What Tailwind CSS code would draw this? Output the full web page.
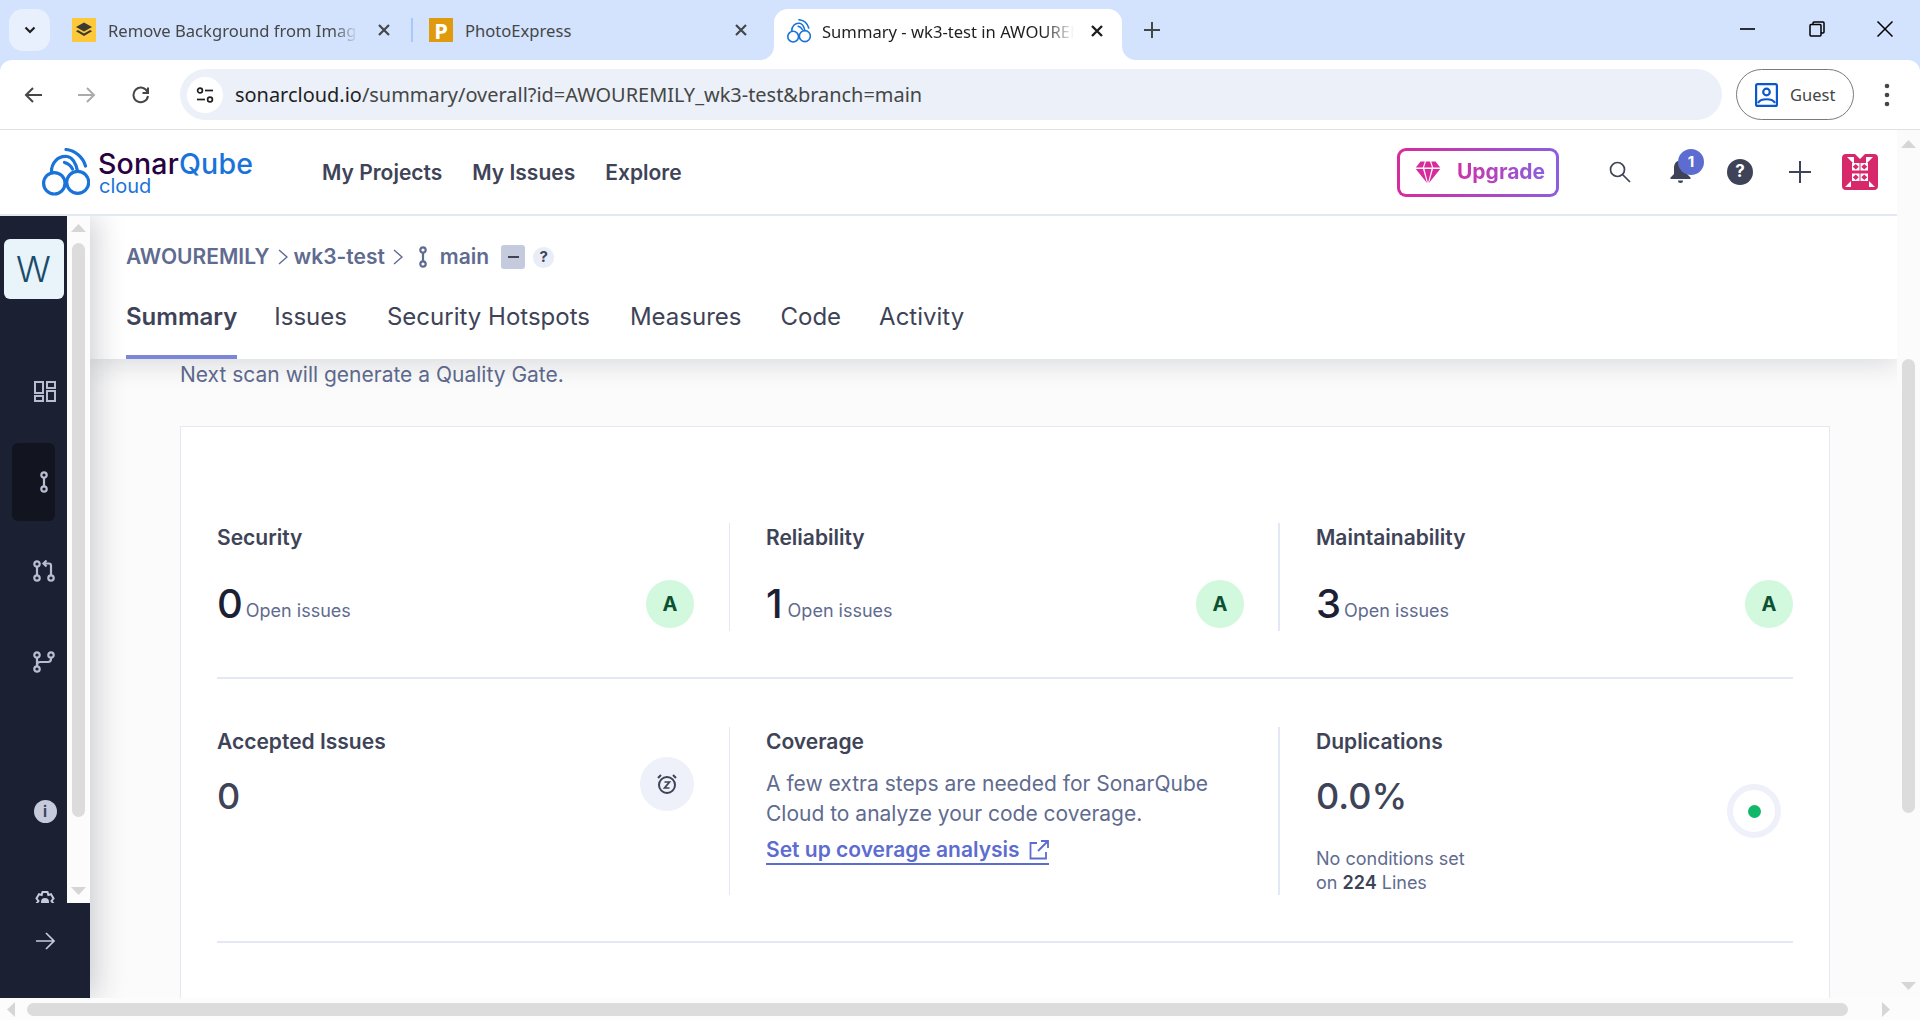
<!DOCTYPE html>
<html lang="en">
<head>
<meta charset="utf-8">
<title>Summary - wk3-test</title>
<script src="https://cdn.jsdelivr.net/npm/@tailwindcss/browser@4"></script>
</head>
<body class="w-[1920px] h-[1020px] overflow-hidden bg-white font-[Inter,sans-serif]">
<svg width="0" height="0" class="absolute">
  <defs>
    <symbol id="sq" viewBox="0 0 48 48">
      <g fill="none" stroke="currentColor" stroke-width="3.200" stroke-linecap="round">
        <circle cx="12.300" cy="35.300" r="10.700"/>
        <circle cx="35.700" cy="34.300" r="11"/>
        <path d="M9.500 24.500C9 15 16 7.500 25 8.500C30 9 34 15 35.500 23"/>
        <path d="M24 1.500C33 2.500 41 9 43.500 18"/>
        <path d="M22.500 14.500C26 15.500 29 18 30.500 21"/>
      </g>
    </symbol>
    <symbol id="branch" viewBox="0 0 12 22">
      <g fill="none" stroke="currentColor" stroke-width="2.2">
        <circle cx="6" cy="4" r="2.7"/><circle cx="6" cy="18" r="2.7"/><path d="M6 7v8"/>
      </g>
    </symbol>
  </defs>
</svg>

<div class="flex h-full flex-col">
  <!-- Tab strip -->
  <div class="flex h-[60px] shrink-0 items-start bg-[#d3e3fd] font-['Noto_Sans',sans-serif] text-[16.6px] text-[#444746]">
    <div class="ml-[9px] mt-[9px] flex h-[42px] w-[41px] items-center justify-center rounded-[14px] bg-[#e9f0fd]">
      <svg width="14" height="14" viewBox="0 0 14 14" fill="none" stroke="#1f1f1f" stroke-width="2.2"><path d="M2.5 4.5 7 9l4.500-4.500"/></svg>
    </div>
    <!-- tab 1 -->
    <div class="ml-[22px] mt-[18px] flex h-[24px] w-[340px] items-center">
      <div class="flex size-[24px] items-center justify-center bg-[#fdc93a]">
        <svg width="18" height="16" viewBox="0 0 18 16" fill="#3b3a32"><path d="M9 0.500 17 5 9 9.500 1 5Z"/><path d="M2.800 8 9 11.500 15.200 8 17 9.200 9 14 1 9.200Z"/></svg>
      </div>
      <span class="ml-[12px] w-[250px] translate-y-[1px] overflow-hidden whitespace-nowrap leading-[24px] [mask-image:linear-gradient(90deg,#000_90%,transparent)]">Remove Background from Imag</span>
      <svg class="ml-[19px]" width="14" height="14" viewBox="0 0 14 14" stroke="#444746" stroke-width="2.200"><path d="M2 2l10 10M12 2 2 12"/></svg>
    </div>
    <div class="ml-[-1px] mt-[18px] h-[24px] w-[2px] bg-[#a8c7fa]"></div>
    <!-- tab 2 -->
    <div class="ml-[16px] mt-[18px] flex h-[24px] w-[319px] items-center">
      <div class="flex size-[24px] items-center justify-center bg-[#e09a0d] text-[22px] font-bold leading-none text-white">P</div>
      <span class="ml-[12px] translate-y-[1px] whitespace-nowrap leading-[24px]">PhotoExpress</span>
      <svg class="ml-auto" width="14" height="14" viewBox="0 0 14 14" stroke="#444746" stroke-width="2.200"><path d="M2 2l10 10M12 2 2 12"/></svg>
    </div>
    <!-- active tab -->
    <div class="relative ml-[26px] mt-[9px] flex h-[51px] w-[348px] items-center rounded-t-[14px] bg-white pb-[7px] text-[#1f1f1f]">
      <svg class="absolute bottom-0 left-[-14px]" width="14" height="14" viewBox="0 0 14 14"><path d="M0 14A14 14 0 0 0 14 0V14Z" fill="#fff"/></svg>
      <svg class="absolute bottom-0 right-[-14px]" width="14" height="14" viewBox="0 0 14 14"><path d="M14 14A14 14 0 0 1 0 0V14Z" fill="#fff"/></svg>
      <svg class="ml-[13px] text-[#1a73d8]" width="24" height="24"><use href="#sq"/></svg>
      <span class="ml-[11px] w-[252px] translate-y-[1px] overflow-hidden whitespace-nowrap leading-[24px] [mask-image:linear-gradient(90deg,#000_88%,transparent)]">Summary - wk3-test in AWOUREMILY</span>
      <svg class="ml-[16px]" width="14" height="14" viewBox="0 0 14 14" stroke="#1f1f1f" stroke-width="2.400"><path d="M2 2l10 10M12 2 2 12"/></svg>
    </div>
    <svg class="ml-[22px] mt-[22px]" width="16" height="16" viewBox="0 0 16 16" stroke="#444746" stroke-width="2"><path d="M8 0v16M0 8h16"/></svg>
    <!-- window controls -->
    <div class="ml-auto flex items-center pr-[27px] pt-[21px]">
      <svg width="15" height="16" viewBox="0 0 15 16" stroke="#000" stroke-width="1.600"><path d="M0 8h15"/></svg>
      <svg class="ml-[54px]" width="16" height="16" viewBox="0 0 16 16" fill="none" stroke="#000" stroke-width="1.500"><rect x="1" y="3.500" width="11" height="11.500" rx="1"/><path d="M4 3.500V2a1 1 0 0 1 1-1h9a1 1 0 0 1 1 1v9a1 1 0 0 1-1 1h-2"/></svg>
      <svg class="ml-[52px]" width="16" height="16" viewBox="0 0 16 16" stroke="#000" stroke-width="1.500"><path d="M0.500 0.500l15 15M15.500 0.500l-15 15"/></svg>
    </div>
  </div>

  <!-- Toolbar -->
  <div class="bg-[#d3e3fd]">
    <div class="flex h-[70px] items-center rounded-t-[12px] border-b border-[#e1e1e1] bg-white font-['Noto_Sans',sans-serif]">
      <svg class="ml-[24px]" width="18" height="18" viewBox="0 0 18 18" fill="none" stroke="#444746" stroke-width="2"><path d="M18 9H2M9 2 2 9l7 7"/></svg>
      <svg class="ml-[36px]" width="18" height="18" viewBox="0 0 18 18" fill="none" stroke="#ababab" stroke-width="2"><path d="M0 9h16M9 2l7 7-7 7"/></svg>
      <svg class="ml-[36px]" width="18" height="18" viewBox="0 0 18 18" fill="none" stroke="#444746" stroke-width="2"><path d="M15.500 6A7.300 7.300 0 1 0 16 10"/><path d="M16 1.500V7h-5.500" /></svg>
      <div class="ml-[30px] flex h-[51px] w-[1542px] items-center rounded-full bg-[#ebf0f9] pl-[7px]">
        <div class="flex size-[36px] items-center justify-center rounded-full bg-white">
          <svg width="20" height="18" viewBox="0 0 20 18" fill="none" stroke="#1f1f1f" stroke-width="1.700"><circle cx="5" cy="4.500" r="2.400"/><path d="M10 4.500h8"/><circle cx="15" cy="13.500" r="2.400"/><path d="M2 13.500h8"/></svg>
        </div>
        <span class="ml-[12px] whitespace-nowrap text-[19.95px] leading-[28px] text-[#444746]"><span class="text-[#1f1f1f]">sonarcloud.io</span>/summary/overall?id=AWOUREMILY_wk3-test&amp;branch=main</span>
      </div>
      <div class="ml-[14px] flex h-[51px] w-[118px] items-center rounded-full border-[1.5px] border-[#7a7a7a] pl-[18px]">
        <svg width="23" height="24" viewBox="0 0 23 24" fill="none" stroke="#0b57d0" stroke-width="2.200"><rect x="1.100" y="1.100" width="20.800" height="21.800" rx="1.500"/><circle cx="11.500" cy="9" r="3.300"/><path d="M3 20c2.500-5 14.500-5 17 0"/></svg>
        <span class="ml-[12px] text-[16.5px] leading-[24px] text-[#444746]">Guest</span>
      </div>
      <svg class="ml-[30px]" width="6" height="24" viewBox="0 0 6 24" fill="#444746"><circle cx="3" cy="3" r="2.300"/><circle cx="3" cy="12" r="2.300"/><circle cx="3" cy="21" r="2.300"/></svg>
    </div>
  </div>

  <!-- Page area -->
  <div class="flex min-h-0 flex-1">
    <div class="flex min-w-0 flex-1 flex-col">
      <!-- Top nav -->
      <div class="relative z-30 flex h-[86px] shrink-0 items-center border-b-2 border-[#e3e8f4] bg-white">
        <svg class="ml-[42px] text-[#1a73d8]" width="48" height="48"><use href="#sq"/></svg>
        <div class="ml-[8px] mt-[1px] flex w-[171px] flex-col">
          <span class="text-[28.5px] font-medium leading-[26px] tracking-[0.2px] text-[#290042]">Sonar<span class="text-[#1a73d8]">Qube</span></span>
          <span class="ml-[1px] text-[20px] leading-[18px] text-[#1a73d8]">cloud</span>
        </div>
        <div class="ml-[53px] mt-[1px] flex gap-[30px] text-[21px] font-semibold leading-[28px] text-[#3e4357]">
          <span>My Projects</span><span>My Issues</span><span>Explore</span>
        </div>
        <div class="ml-auto flex h-[49px] w-[162px] items-center rounded-[9px] bg-[linear-gradient(90deg,#d92a9c,#8a5fe0)] p-[3px]">
          <div class="flex h-full w-full items-center rounded-[6px] bg-white pl-[15px]">
            <svg width="26" height="23" viewBox="0 0 26 23" fill="#d92a9c"><path d="M5.500 0.500h4.300L7.800 6.500H0.800Z"/><path d="M11 0.500h4L17 6.500H9Z"/><path d="M16.300 0.500h4.200l4.700 6h-7Z"/><path d="M0.800 8H8l4 14Z"/><path d="M9.500 8h7L13 22Z"/><path d="M18 8h7.200L14 22Z"/></svg>
            <span class="ml-[16px] bg-[linear-gradient(90deg,#cf32a8,#8a5fe0)] bg-clip-text text-[21px] font-bold leading-[28px] text-transparent">Upgrade</span>
          </div>
        </div>
        <svg class="ml-[50px]" width="22" height="22" viewBox="0 0 22 22" fill="none" stroke="#3e4357" stroke-width="1.700"><circle cx="8.500" cy="8.500" r="7"/><path d="m13.500 13.500 7.500 7.500"/></svg>
        <div class="relative ml-[39px] h-[24px] w-[21px]">
          <svg width="21" height="24" viewBox="0 0 21 24" fill="#3e4357"><path d="M10.500 0.500c4.500 0 6.500 3.500 6.500 7.500v6l3.500 3.500v1.500H0.500v-1.500L4 14V8c0-4 2-7.500 6.500-7.500Z"/><path d="M8 20.500h5a2.500 2.500 0 0 1-5 0Z"/></svg>
          <span class="absolute left-[8px] top-[-11px] flex size-[26px] items-center justify-center rounded-full bg-[#5d6cd0] text-[15px] font-bold text-white">1</span>
        </div>
        <span class="ml-[36px] flex size-[26px] items-center justify-center rounded-full bg-[#3e4357] text-[17px] font-bold text-white">?</span>
        <svg class="ml-[36px]" width="22" height="22" viewBox="0 0 22 22" stroke="#3e4357" stroke-width="2"><path d="M11 0v22M0 11h22"/></svg>
        <svg class="ml-[31px] mr-[19px]" width="36" height="36" viewBox="0 0 36 36"><path d="M4 0h9l5 5 5-5h9a4 4 0 0 1 4 4v28a4 4 0 0 1-4 4H4a4 4 0 0 1-4-4V4a4 4 0 0 1 4-4Z" fill="#d6286b"/><g fill="#fff"><path d="M5 3l7 0v7ZM31 3h-7v7ZM3 33l6-6v6ZM33 33l-6-6v6Z"/><path d="M10 9h7.500v7.500H10ZM18.500 9H26v7.500h-7.500ZM10 19.500h7.500V27H10ZM18.500 19.500H26V27h-7.500Z"/></g><g fill="#d6286b"><path d="M13.750 10l3 2.750-3 2.750-3-2.750ZM22.250 10l3 2.750-3 2.750-3-2.750ZM13.750 20.500l3 2.750-3 2.750-3-2.750ZM22.250 20.500l3 2.750-3 2.750-3-2.750Z"/></g></svg>
      </div>

      <div class="flex min-h-0 flex-1">
        <!-- Sidebar -->
        <div class="relative z-20 flex w-[90px] shrink-0 flex-col bg-[#1c2033] shadow-[6px_0_30px_rgba(30,35,60,0.22)]">
          <div class="flex h-[687px] shrink-0">
            <div class="flex h-full w-[67px] flex-col items-center overflow-hidden text-[#b9bdd1]">
              <div class="mt-[23px] flex size-[60px] shrink-0 items-center justify-center rounded-[6px] bg-[#e8f3fa] text-[36px] font-light leading-none text-[#1b4b6b]">W</div>
              <svg class="ml-[23px] mt-[82px] shrink-0" width="22" height="21" viewBox="0 0 22 21" fill="none" stroke="#b9bdd1" stroke-width="2"><rect x="1" y="1" width="8" height="11"/><rect x="13" y="1" width="8" height="6"/><rect x="1" y="15" width="8" height="5"/><rect x="13" y="10" width="8" height="10"/></svg>
              <div class="mt-[41px] flex h-[78px] w-[43px] shrink-0 items-center justify-end rounded-[6px] bg-[#12151f] pr-[5px]">
                <svg class="text-[#b9bdd1]" width="12" height="22"><use href="#branch"/></svg>
              </div>
              <svg class="ml-[21px] mt-[39px] shrink-0" width="22" height="22" viewBox="0 0 22 22" fill="none" stroke="#b9bdd1" stroke-width="2.200"><circle cx="4" cy="4" r="2.700"/><circle cx="4" cy="18" r="2.700"/><path d="M4 7v8"/><circle cx="18" cy="18" r="2.700"/><path d="M18 15V5.500a2 2 0 0 0-2-2h-5"/><path d="m13.500 0.500-3 3 3 3"/></svg>
              <svg class="ml-[21px] mt-[69px] shrink-0" width="22" height="22" viewBox="0 0 22 22" fill="none" stroke="#b9bdd1" stroke-width="2.200"><circle cx="4" cy="4" r="2.700"/><circle cx="4" cy="18" r="2.700"/><path d="M4 7v8"/><circle cx="18" cy="4" r="2.700"/><path d="M18 7v1a3 3 0 0 1-3 3H7a3 3 0 0 0-3 3"/></svg>
              <span class="ml-[23px] mt-[127px] flex size-[23px] shrink-0 items-center justify-center rounded-full bg-[#c5cadd] text-[15px] font-bold leading-none text-[#3e4357]">i</span>
              <svg class="ml-[23px] mt-[68px] shrink-0" width="22" height="22" viewBox="0 0 22 22" fill="none" stroke="#c5cadd" stroke-width="2"><path d="M8.500 1h5l.8 3 2.700-.8 2.500 4.300-2 2.500 2 2.500-2.500 4.300-2.700-.8-.8 3h-5l-.8-3-2.700.8-2.500-4.300 2-2.500-2-2.500L5 3.200l2.700.8Z"/><circle cx="11" cy="11" r="3" fill="#c5cadd"/></svg>
            </div>
            <div class="flex h-full w-[23px] flex-col items-center bg-[#fcfcfc]">
              <svg class="mt-[8px]" width="15" height="8" viewBox="0 0 15 8" fill="#d6d6d6"><path d="M7.500 0 15 8H0Z"/></svg>
              <div class="mt-[11px] h-[574px] w-[13px] rounded-full bg-[#dcdcdc]"></div>
              <svg class="mt-[70px]" width="15" height="8" viewBox="0 0 15 8" fill="#d6d6d6"><path d="M7.500 8 15 0H0Z"/></svg>
            </div>
          </div>
          <div class="flex flex-1 pl-[36px] pt-[29px]">
            <svg width="19" height="18" viewBox="0 0 19 18" fill="none" stroke="#c5cadd" stroke-width="1.700"><path d="M0 9h18M10 1l8 8-8 8"/></svg>
          </div>
        </div>

        <!-- Content -->
        <div class="relative flex min-w-0 flex-1 flex-col bg-[#fbfbfb]">
          <div class="relative z-10 h-[143px] shrink-0 bg-white pl-[36px] pt-[27px] shadow-[0_6px_24px_rgba(30,35,60,0.14)]">
            <div class="flex h-[28px] items-center text-[21px] font-semibold text-[#5f6b8f]">
              <span>AWOUREMILY</span>
              <svg class="ml-[8px]" width="10" height="18" viewBox="0 0 10 18" fill="none" stroke="#5f6b8f" stroke-width="1.400"><path d="m1 2 8 7-8 7"/></svg>
              <span class="ml-[6px]">wk3-test</span>
              <svg class="ml-[8px]" width="10" height="18" viewBox="0 0 10 18" fill="none" stroke="#5f6b8f" stroke-width="1.400"><path d="m1 2 8 7-8 7"/></svg>
              <svg class="ml-[14px]" width="12" height="22"><use href="#branch"/></svg>
              <span class="ml-[11px]">main</span>
              <span class="ml-[12px] flex h-[24px] w-[24px] items-center justify-center rounded-[3px] bg-[#c5cadd]"><span class="h-[2px] w-[11px] bg-[#3e4357]"></span></span>
              <span class="ml-[8px] flex size-[21px] items-center justify-center rounded-full bg-[#e9edf8] text-[15px] font-bold text-[#3e4357]">?</span>
            </div>
            <div class="mt-[16px] flex h-[72px] pt-[14px] text-[24px] leading-[31px] text-[#3e4357]">
              <span class="border-b-[4px] border-[#7c86d8] font-semibold">Summary</span>
              <span class="ml-[37px]">Issues</span>
              <span class="ml-[40px]">Security Hotspots</span>
              <span class="ml-[40px]">Measures</span>
              <span class="ml-[39px]">Code</span>
              <span class="ml-[38px]">Activity</span>
            </div>
          </div>

          <div class="min-h-0 flex-1 overflow-hidden pl-[90px] pr-[67px]">
            <p class="pt-[2px] text-[21px] leading-[28px] text-[#5f6b8f]">Next scan will generate a Quality Gate.</p>
            <div class="mt-[37px] border border-[#e3e8f4] bg-white px-[36px] pb-[40px] pt-[96px]">
              <!-- Row 1 -->
              <div class="grid grid-cols-[512px_549px_1fr] border-b-2 border-[#e3e8f4] pb-[46px]">
                <div class="h-[108px] pr-[35px]">
                  <div class="text-[21px] font-semibold leading-[30px] text-[#3e4357]">Security</div>
                  <div class="mt-[27px] flex items-center justify-between">
                    <div class="flex items-baseline gap-[3px]"><span class="text-[40px] font-medium leading-[48px] text-[#1c2033]">0</span><span class="-translate-y-[1px] text-[18px] text-[#5f6b8f]">Open issues</span></div>
                    <span class="flex size-[48px] items-center justify-center rounded-full bg-[#d2f8de] text-[20px] font-bold text-[#0b5132]">A</span>
                  </div>
                </div>
                <div class="h-[108px] border-l border-[#e3e8f4] pl-[36px] pr-[34px]">
                  <div class="text-[21px] font-semibold leading-[30px] text-[#3e4357]">Reliability</div>
                  <div class="mt-[27px] flex items-center justify-between">
                    <div class="flex items-baseline gap-[5px]"><span class="text-[40px] font-medium leading-[48px] text-[#1c2033]">1</span><span class="-translate-y-[1px] text-[18px] text-[#5f6b8f]">Open issues</span></div>
                    <span class="flex size-[48px] items-center justify-center rounded-full bg-[#d2f8de] text-[20px] font-bold text-[#0b5132]">A</span>
                  </div>
                </div>
                <div class="h-[108px] border-l-2 border-[#e3e8f4] pl-[36px]">
                  <div class="text-[21px] font-semibold leading-[30px] text-[#3e4357]">Maintainability</div>
                  <div class="mt-[27px] flex items-center justify-between">
                    <div class="flex items-baseline gap-[3px]"><span class="text-[40px] font-medium leading-[48px] text-[#1c2033]">3</span><span class="-translate-y-[1px] text-[18px] text-[#5f6b8f]">Open issues</span></div>
                    <span class="flex size-[48px] items-center justify-center rounded-full bg-[#d2f8de] text-[20px] font-bold text-[#0b5132]">A</span>
                  </div>
                </div>
              </div>
              <!-- Row 2 -->
              <div class="grid grid-cols-[512px_549px_1fr] border-b-2 border-[#e3e8f4] pb-[46px] pt-[48px]">
                <div class="flex h-[168px] justify-between pr-[35px]">
                  <div>
                    <div class="text-[21px] font-semibold leading-[30px] text-[#3e4357]">Accepted Issues</div>
                    <div class="mt-[15px] text-[36px] font-medium leading-[48px] text-[#3e4357]">0</div>
                  </div>
                  <span class="mt-[30px] flex size-[54px] items-center justify-center rounded-full bg-[#eef1f9]">
                    <svg width="22" height="22" viewBox="0 0 22 22" fill="none" stroke="#3e4357" stroke-width="2"><circle cx="11" cy="12" r="8"/><path d="M2 5l3-3M20 5l-3-3"/><path d="M8.500 9h5l-5 6h5" stroke-width="1.700"/></svg>
                  </span>
                </div>
                <div class="h-[168px] border-l border-[#e3e8f4] pl-[36px] pr-[34px]">
                  <div class="text-[21px] font-semibold leading-[30px] text-[#3e4357]">Coverage</div>
                  <p class="mt-[12px] whitespace-nowrap text-[21px] leading-[30px] text-[#5f6b8f]">A few extra steps are needed for SonarQube<br>Cloud to analyze your code coverage.</p>
                  <a class="mt-[8px] inline-flex items-center gap-[9px] border-b-2 border-[#5d6cd0] text-[21px] font-semibold leading-[26px] text-[#5d6cd0]">Set up coverage analysis
                    <svg width="20" height="20" viewBox="0 0 20 20" fill="none" stroke="#5d6cd0" stroke-width="1.800"><path d="M8 3H1.500v15.500H17V12"/><path d="M12 1h7v7M19 1 9 11"/></svg>
                  </a>
                </div>
                <div class="flex h-[168px] justify-between border-l-2 border-[#e3e8f4] pl-[36px] pr-[12px]">
                  <div>
                    <div class="text-[21px] font-semibold leading-[30px] text-[#3e4357]">Duplications</div>
                    <div class="mt-[15px] text-[36px] font-medium leading-[48px] text-[#3e4357]">0.0%</div>
                    <p class="mt-[27px] text-[18px] leading-[24px] text-[#5f6b8f]">No conditions set<br>on <b class="font-semibold text-[#3e4357]">224</b> Lines</p>
                  </div>
                  <span class="mt-[57px] flex size-[54px] items-center justify-center rounded-full border-[6px] border-[#eef1f9]"><span class="size-[13px] rounded-full bg-[#12b76a]"></span></span>
                </div>
              </div>
              <div class="mt-[52px] text-[21px] font-semibold leading-[28px] text-[#3e4357]">Security Hotspots</div>
            </div>
          </div>
        </div>
      </div>
    </div>

    <!-- Page vertical scrollbar -->
    <div class="relative z-30 flex w-[23px] shrink-0 flex-col items-center bg-[#fbfbfb]">
      <svg class="mt-[10px]" width="15" height="8" viewBox="0 0 15 8" fill="#d6d6d6"><path d="M7.500 0 15 8H0Z"/></svg>
      <div class="mt-[211px] h-[454px] w-[13px] rounded-full bg-[#dcdcdc]"></div>
      <svg class="mb-[8px] mt-auto" width="15" height="8" viewBox="0 0 15 8" fill="#d6d6d6"><path d="M7.500 8 15 0H0Z"/></svg>
    </div>
  </div>

  <!-- Page horizontal scrollbar -->
  <div class="relative z-30 flex h-[22px] shrink-0 items-center bg-[#fcfcfc]">
    <svg class="ml-[7px]" width="8" height="15" viewBox="0 0 8 15" fill="#d6d6d6"><path d="M0 7.500 8 0V15Z"/></svg>
    <div class="ml-[12px] h-[13px] w-[1821px] rounded-full bg-[#dcdcdc]"></div>
    <svg class="ml-[34px]" width="8" height="15" viewBox="0 0 8 15" fill="#d6d6d6"><path d="M8 7.500 0 0V15Z"/></svg>
  </div>
</div>
</body>
</html>
